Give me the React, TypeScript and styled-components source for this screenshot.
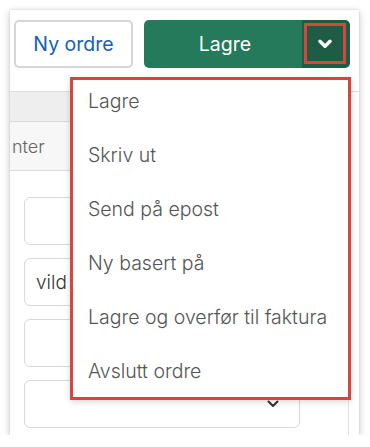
import React from "react";
import styled, { createGlobalStyle } from "styled-components";

const Global = createGlobalStyle`
  html, body { margin: 0; padding: 0; background: #ffffff; }
  body { font-family: Inter, "Noto Sans", sans-serif; }
  * { box-sizing: border-box; }
`;

const Card = styled.div`
  position: relative;
  margin: 10px 0 0 10px;
  width: 349px;
  height: 425px;
  background: #ffffff;
  box-shadow: 0 2px 8px rgba(0, 0, 0, 0.22), 0 0 2px rgba(0, 0, 0, 0.12);
  overflow: hidden;
  display: flex;
  flex-direction: column;
`;

const Toolbar = styled.div`
  display: flex;
  gap: 11px;
  padding: 10px 0 0 4px;
  height: 82px;
  border-bottom: 1px solid #dcdcdc;
`;

const OutlineButton = styled.button`
  width: 119px;
  height: 48px;
  border: 2px solid #d6d6d6;
  border-radius: 5px;
  background: #ffffff;
  color: #1561b1;
  font-family: Inter, "Noto Sans", sans-serif;
  font-size: 19.5px;
  font-weight: 400;
  padding: 0;
`;

const SplitButton = styled.div`
  width: 206px;
  height: 48px;
  display: flex;
  border-radius: 5px;
  overflow: hidden;
`;

const MainPart = styled.div`
  flex: 1;
  background: #247a5a;
  color: #ffffff;
  font-size: 19.5px;
  display: flex;
  align-items: center;
  justify-content: center;
  padding-left: 4px;
`;

const CaretPart = styled.div`
  width: 48px;
  background: #1e5c45;
  display: flex;
  align-items: center;
  justify-content: center;
  padding: 3px 4px 4px 2px;
`;

const CaretFrame = styled.div`
  width: 42px;
  height: 41px;
  border: 3px solid #d9453d;
  display: flex;
  align-items: center;
  justify-content: center;
`;

const Body = styled.div`
  flex: 1;
  display: flex;
`;

const Main = styled.div`
  flex: 1;
  display: flex;
  flex-direction: column;
`;

const Scroll = styled.div`
  width: 11px;
  border-left: 1px solid #e2e2e2;
  background: #ffffff;
`;

const TabBar = styled.div`
  height: 30px;
  background: #eeeeee;
  border-bottom: 1px solid #dadada;
`;

const SubBar = styled.div`
  height: 49px;
  background: #f7f7f7;
  border-bottom: 1px solid #dadada;
  display: flex;
  align-items: center;
  padding-left: 2px;
  font-size: 18px;
  font-weight: 300;
  color: #666666;
`;

const Form = styled.div`
  display: flex;
  flex-direction: column;
  gap: 13px;
  padding: 26px 0 0 14px;
`;

const Field = styled.div`
  width: 276px;
  height: 48px;
  border: 1px solid #d9d9d9;
  border-radius: 6px;
  display: flex;
  align-items: center;
  justify-content: space-between;
  padding: 0 18px 0 11px;
  font-size: 19px;
  font-weight: 350;
  color: #333333;
`;

const Menu = styled.div`
  position: absolute;
  left: 60px;
  top: 67px;
  width: 281px;
  height: 323px;
  border: 3px solid #d9453d;
  background: #ffffff;
  box-shadow: 0 2px 6px rgba(0, 0, 0, 0.15);
  display: flex;
  flex-direction: column;
  gap: 12px;
  padding: 0 0 0 15px;
`;

const MenuItem = styled.div`
  height: 42px;
  display: flex;
  align-items: center;
  font-size: 19.5px;
  font-weight: 350;
  color: #555555;
  white-space: nowrap;
`;

const Chevron = ({ color, size, sw }: { color: string; size: number; sw: number }) => (
  <svg width={size} height={size} viewBox="0 0 16 16" fill="none">
    <path d="M3.5 5.5 L8 10 L12.5 5.5" stroke={color} strokeWidth={sw} strokeLinecap="round" strokeLinejoin="round" />
  </svg>
);

const items = [
  "Lagre",
  "Skriv ut",
  "Send på epost",
  "Ny basert på",
  "Lagre og overfør til faktura",
  "Avslutt ordre",
];

export default function App() {
  return (
    <>
      <Global />
      <Card>
        <Toolbar>
          <OutlineButton>Ny ordre</OutlineButton>
          <SplitButton>
            <MainPart>Lagre</MainPart>
            <CaretPart>
              <CaretFrame>
                <Chevron color="#ffffff" size={18} sw={3} />
              </CaretFrame>
            </CaretPart>
          </SplitButton>
        </Toolbar>
        <Body>
          <Main>
            <TabBar />
            <SubBar>nter</SubBar>
            <Form>
              <Field />
              <Field>vild</Field>
              <Field />
              <Field>
                <span />
                <Chevron color="#333333" size={16} sw={2} />
              </Field>
            </Form>
          </Main>
          <Scroll />
        </Body>
        <Menu>
          {items.map((t) => (
            <MenuItem key={t}>{t}</MenuItem>
          ))}
        </Menu>
      </Card>
    </>
  );
}
